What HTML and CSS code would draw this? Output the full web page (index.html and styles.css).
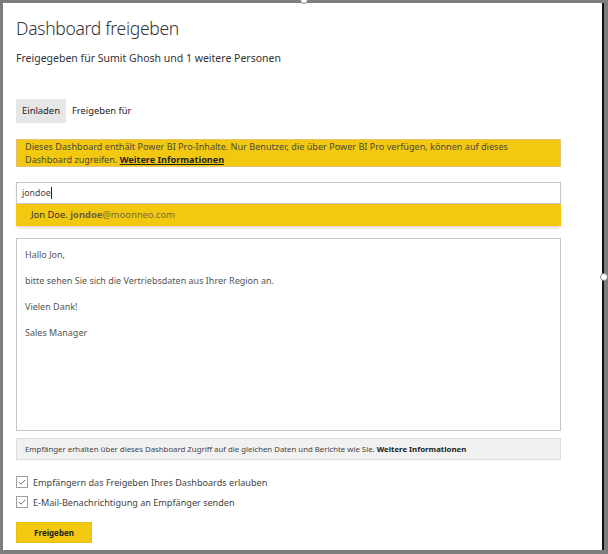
FILE: index.html
```html
<!DOCTYPE html>
<html lang="de">
<head>
<meta charset="utf-8">
<title>Dashboard freigeben</title>
<link rel="stylesheet" href="styles.css">
</head>
<body>
<div class="screen">
  <div class="dialog">
    <h1 class="title">Dashboard freigeben</h1>
    <p class="subtitle">Freigegeben für Sumit Ghosh und 1 weitere Personen</p>
    <div class="tabs">
      <span class="tab active">Einladen</span>
      <span class="tab">Freigeben für</span>
    </div>
    <div class="banner">Dieses Dashboard enthält Power BI Pro-Inhalte. Nur Benutzer, die über Power BI Pro verfügen, können auf dieses Dashboard zugreifen. <a class="banner-link">Weitere Informationen</a></div>
    <div class="picker">
      <div class="input">jondoe<span class="caret"></span></div>
      <div class="suggestion"><span class="name">Jon Doe.</span> <span class="mail"><b>jondoe</b>@moonneo.com</span></div>
    </div>
    <div class="message">
      <p>Hallo Jon,</p>
      <p>bitte sehen Sie sich die Vertriebsdaten aus Ihrer Region an.</p>
      <p>Vielen Dank!</p>
      <p>Sales Manager</p>
    </div>
    <div class="info">Empfänger erhalten über dieses Dashboard Zugriff auf die gleichen Daten und Berichte wie Sie. <b>Weitere Informationen</b></div>
    <label class="check"><span class="box"><svg viewBox="0 0 12 12" width="12" height="12"><path d="M2.5 6.2 L5 8.6 L9.6 3.6" fill="none" stroke="#555" stroke-width="1"/></svg></span>Empfängern das Freigeben Ihres Dashboards erlauben</label>
    <label class="check"><span class="box"><svg viewBox="0 0 12 12" width="12" height="12"><path d="M2.5 6.2 L5 8.6 L9.6 3.6" fill="none" stroke="#555" stroke-width="1"/></svg></span>E-Mail-Benachrichtigung an Empfänger senden</label>
    <button class="share">Freigeben</button>
  </div>
  <span class="handle h-top"></span>
  <span class="handle h-right"></span>
</div>
</body>
</html>
```
FILE: styles.css
```css
html, body {
  margin: 0;
  padding: 0;
}
body {
  background: #7d7d7d;
  width: 608px;
  height: 554px;
  overflow: hidden;
  font-family: "Noto Sans", "Open Sans", sans-serif;
}
.screen {
  position: relative;
  width: 608px;
  height: 554px;
  padding: 3px 0 0 3px;
  box-sizing: border-box;
}
.dialog {
  width: 601px;
  height: 547px;
  box-sizing: border-box;
  background: #fff;
  border-right: 2px solid #111;
  padding: 13px 41px 0 13px;
  display: flex;
  flex-direction: column;
}
.title {
  margin: 0;
  font-size: 17.5px;
  font-weight: 300;
  letter-spacing: -0.3px;
  color: #333;
  line-height: 24px;
}
.subtitle {
  margin: 10px 0 0;
  font-size: 10.5px;
  color: #333;
  line-height: 16px;
}
.tabs {
  display: flex;
  margin-top: 33px;
}
.tab {
  font-size: 9.4px;
  color: #222;
  height: 24px;
  line-height: 24px;
  padding: 0 6px;
}
.tab.active {
  background: #e6e6e6;
}
.banner {
  margin-top: 16px;
  background: #f2c811;
  border: 1px solid #e6c370;
  color: #4a4a3a;
  font-size: 9.1px;
  line-height: 12.5px;
  padding: 1px 8px;
  height: 28px;
  box-sizing: border-box;
}
.banner-link {
  color: #222;
  font-weight: 700;
  text-decoration: underline;
}
.picker {
  margin-top: 15px;
  box-shadow: 0 3px 3px -1px rgba(200, 120, 120, 0.35);
}
.input {
  border: 1px solid #c6c6c6;
  height: 22px;
  box-sizing: border-box;
  font-size: 8.8px;
  line-height: 20px;
  padding-left: 5px;
  color: #444;
}
.caret {
  display: inline-block;
  width: 1px;
  height: 12px;
  background: #222;
  vertical-align: -3px;
}
.suggestion {
  background: #f2c811;
  height: 22px;
  line-height: 22px;
  font-size: 9.4px;
  padding-left: 15px;
  color: #333;
}
.mail {
  color: #7a6a3a;
}
.mail b {
  color: #6e6140;
}
.message {
  margin-top: 12px;
  border: 1px solid #c8c8c8;
  height: 193px;
  box-sizing: border-box;
  padding: 9px 8px 7px;
  font-size: 9px;
  color: #555;
}
.message p {
  margin: 0 0 13px;
  line-height: 13px;
}
.info {
  margin-top: 7px;
  background: #f1f1f1;
  border: 1px solid #dcdcdc;
  height: 22px;
  box-sizing: border-box;
  font-size: 7.8px;
  line-height: 20px;
  padding-left: 8px;
  color: #444;
}
.info b {
  color: #222;
}
.check {
  display: flex;
  align-items: center;
  font-size: 9.1px;
  color: #444;
  height: 12px;
  gap: 5px;
}
.check:first-of-type {
  margin-top: 16px;
}
.check + .check {
  margin-top: 8px;
}
.box {
  width: 12px;
  height: 12px;
  box-sizing: border-box;
  border: 1px solid #a0a0a0;
  display: flex;
  align-items: center;
  justify-content: center;
  background: #fff;
}
.box svg {
  display: block;
}
.share {
  margin-top: 14px;
  align-self: flex-start;
  width: 76px;
  height: 21px;
  background: #f2c811;
  border: 1px solid #e8c10e;
  font-family: inherit;
  font-size: 8px;
  font-weight: 700;
  color: #222;
  padding: 0;
}
.handle {
  position: absolute;
  width: 8px;
  height: 8px;
  border-radius: 50%;
  background: #fff;
  border: 1px solid #888;
  box-sizing: border-box;
}
.h-top {
  left: 300px;
  top: -4px;
}
.h-right {
  left: 600px;
  top: 273px;
}
```
